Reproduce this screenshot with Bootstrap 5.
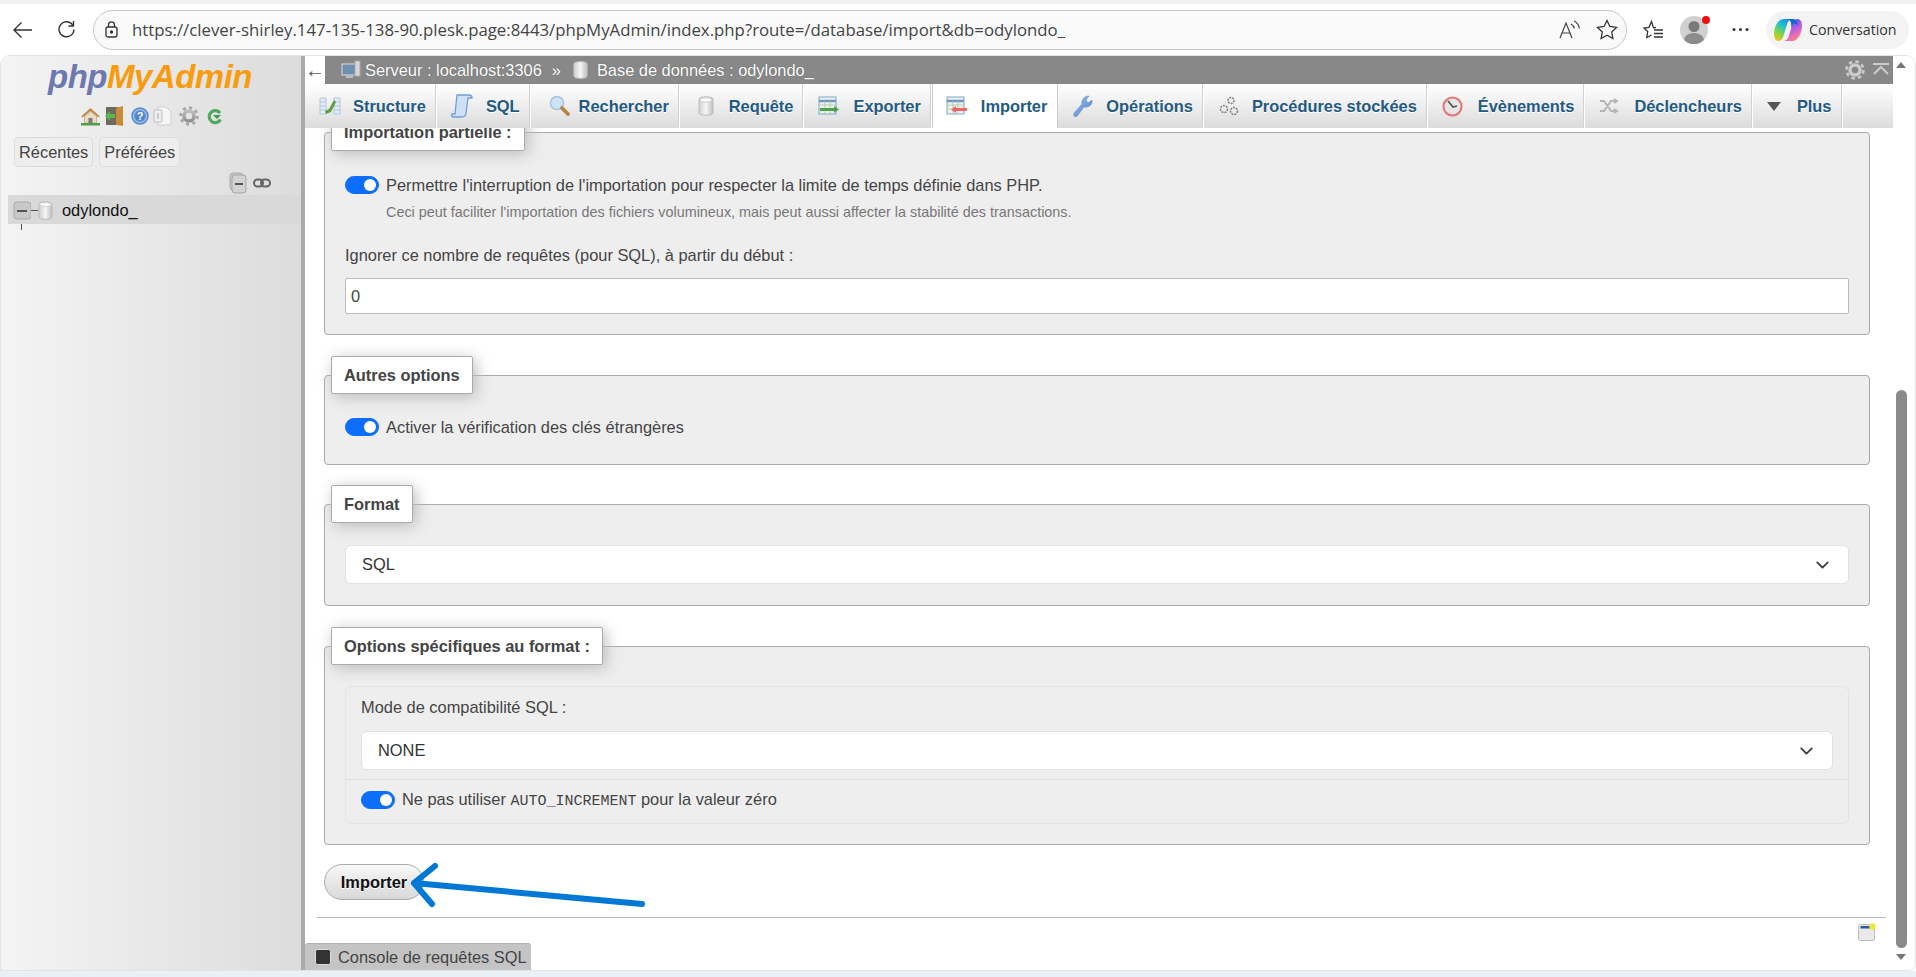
<!DOCTYPE html>
<html lang="fr">
<head>
<meta charset="utf-8">
<title>phpMyAdmin</title>
<link href="https://cdn.jsdelivr.net/npm/bootstrap@5.3.0/dist/css/bootstrap.min.css" rel="stylesheet">
<style>
html,body{height:100%;overflow:hidden}
body{font-family:"Liberation Sans",Arial,sans-serif;font-size:16.4px;color:#444;background:#fff}
.shell{height:977px;width:1916px}
.tabstrip{height:4px;background:#f1f1f1;flex:none}
.toolbar{height:51px;flex:none;background:#fff;padding-left:12px}
.urlbar{width:1534px;height:40px;margin-left:17px;border:1px solid #c8c8c8;border-radius:20px;background:#f9f9f9;padding:0 8px 0 11px}
.urltext{font-family:"Open Sans",sans-serif;font-size:16.8px;color:#444;margin-left:14px;white-space:nowrap}
.pill{width:143px;height:38px;border-radius:19px;background:#f3f3f3;margin-left:17px;padding-left:8px}
.pilltext{font-family:"Open Sans",sans-serif;font-size:14.2px;color:#333;margin-left:7px}
.avatar{position:relative;width:28px;height:28px}
.reddot{position:absolute;right:-2px;top:0;width:8px;height:8px;border-radius:50%;background:#e81010}
.win{flex:1 1 0;min-height:0;border:1px solid #e3e3e3;border-top-left-radius:10px;border-top-right-radius:10px;border-bottom-right-radius:8px;overflow:hidden;position:relative}
.side{width:304px;flex:none;background:linear-gradient(90deg,#f4f4f4,#dcdcdc);border-right:4px solid #a9a9a9}
.logotext{font-weight:700;font-style:italic;font-size:33px;line-height:36px;letter-spacing:-.5px;text-align:center;margin-top:3px;padding-right:2px}
.logotext .p1{color:#6c78af}.logotext .p2{color:#f89c0e}
.quick{height:22px;margin-top:10px;padding-left:79px;gap:3px}
.sidebtn{color:#444;background:#eee;border:1px solid #ddd;border-radius:4px;height:30px;padding:0 4px;line-height:28px}
.sidebtns{margin-top:10px;padding-left:13px;gap:6px}
.treetools{height:28px;padding:4px 0 0 228px;gap:6px}
.dbrow{height:29px;margin-left:7px;background:#d9d9d9;padding:2px 0 0 5px;color:#111}
.dbname{margin-left:9px}
.dbdash{width:7px;height:1px;background:#555}
.treeline{width:1px;height:6px;background:#555;margin-left:20px}
.maincol{min-width:0}
.crumbs{height:28px;flex:none;background:#888;color:#fff;text-shadow:0 0 1px #555}
.backcell{width:20px;height:100%;background:#fff;color:#555;text-shadow:none;font-size:20px}
.crumbsep{margin:0 10px 0 10px}
.dbico{margin:0 9px 0 2px}
.tabband{height:44px;flex:none;background:linear-gradient(#fff,#dcdcdc)}
.tabitem{height:44px;color:#235a81;font-weight:700;border-right:1px solid #fff;box-shadow:inset -1px 0 0 #d2d2d2;padding:0 10px 0 14px;white-space:nowrap;text-shadow:0 1px 0 #fff}
.tabitem.on{background:#fff;box-shadow:none;border-left:1px solid #ccc;border-right:1px solid #ccc;padding-left:13px}
.slot{width:35px;flex:none;display:flex;align-items:center}
.slot.s34{width:34px}
.slot.s36{width:36px}
.slot.slotsm{width:30px}
.pane{flex:1 1 0;min-height:0;overflow:hidden;padding:0 23px 0 19px;position:relative}
.fset{background:#eee;border:1px solid #aaa;border-radius:4px;margin:20px 0 0;padding:0 20px 21px;min-width:0}
.fset:first-child{margin-top:-15px;padding-bottom:20px}
.fset.gap21{margin-top:21px;padding-bottom:23px}
.fset.fset4{margin-top:21px;padding-bottom:20px}
.fleg{float:none;width:auto;font-size:16.4px;font-weight:700;line-height:22px;color:#444;background:#fff;border:1px solid #aaa;border-radius:2px;box-shadow:3px 3px 15px #bbb;padding:7px 12px;margin:0 0 0 -14px;height:38px}
.swrow{height:24px;gap:7px;color:#444}
.swrow .form-check-input{width:34px;height:18px;margin:0;flex:none;float:none;background-color:#0d6efd;border-color:#0d6efd}
.form-switch.swrow{padding-left:0;min-height:0}
.mtop22{margin-top:22px}.mtop21{margin-top:21px}
.hint{font-size:14.4px;line-height:20px;color:#777;margin:5px 0 0 41px}
.lbl{line-height:20px;margin-top:23px}
.field{height:36px;margin-top:13px;border:1px solid #bbb;border-radius:2px;background-color:#fff;color:#444;padding:0 5px}
.sel{height:39px;border-radius:6px;color:#333;font-size:16.4px;padding:0 16px;border-color:#e2e2e2;font-family:inherit;background-position:right 16px center;background-size:19px 14px}
.innerbox{border:1px solid #e4e4e8;border-radius:6px;height:138px}
.innertop{height:93px;padding:9px 15px 0 15px;border-bottom:1px solid #dcdcdc}
.lblh{line-height:22px;margin-bottom:13px}
.inner-sw{margin:8px 0 0 15px}
.mono{font-family:"Liberation Mono",monospace;font-size:15px}
.gobtn{font-size:16.4px;font-weight:700;color:#111;background:linear-gradient(#f8f8f8,#d8d8d8);border:1px solid #aaa;border-radius:18px;height:36px;width:100px;padding:0;margin-top:19px;text-shadow:0 1px 0 #fff}
.rule{height:1px;background:#bbb;opacity:1;border:0;margin:17px -16px 0 -7px}
.notesicon{position:absolute;right:17px;top:795px}
.conbar{height:27px;flex:none}
.contab{width:226px;height:27px;background:#c4c4c4;border-radius:3px 3px 0 0;color:#444;padding-left:10px;gap:7px;white-space:nowrap;border-top:1px solid #b0b0b0}
.scrolltrack{width:22px;flex:none;background:#fff;position:relative}
.thumb{position:absolute;left:3px;top:334px;width:11px;height:558px;border-radius:6px;background:#8a8a8a}
.arr-up{position:absolute;left:3px;top:6px;width:0;height:0;border:5px solid transparent;border-bottom:6px solid #777;border-top:0}
.arr-down{position:absolute;left:3px;top:898px;width:0;height:0;border:5px solid transparent;border-top:6px solid #777;border-bottom:0}
.bottomstrip{height:6px;flex:none;background:#e9f0f8}
.arrowover{position:absolute;left:400px;top:858px;pointer-events:none}
</style>
</head>
<body>
<svg width="0" height="0" class="position-absolute">
  <defs>
    <linearGradient id="cyl" x1="0" y1="0" x2="1" y2="0"><stop offset="0" stop-color="#d0d0d0"/><stop offset=".5" stop-color="#f6f6f6"/><stop offset="1" stop-color="#bdbdbd"/></linearGradient>
    <linearGradient id="gearg" x1="0" y1="0" x2="0" y2="1"><stop offset="0" stop-color="#bdbdbd"/><stop offset="1" stop-color="#8f8f8f"/></linearGradient>
    <linearGradient id="blueg" x1="0" y1="0" x2="1" y2="1"><stop offset="0" stop-color="#9fc0ea"/><stop offset="1" stop-color="#4f82cc"/></linearGradient>
    <linearGradient id="cpa" x1=".7" y1="0" x2=".2" y2="1"><stop offset="0" stop-color="#1b8fe8"/><stop offset=".35" stop-color="#25c2c8"/><stop offset=".65" stop-color="#7ed348"/><stop offset="1" stop-color="#f2c81e"/></linearGradient>
    <linearGradient id="cpb" x1=".3" y1="0" x2=".8" y2="1"><stop offset="0" stop-color="#1e5fe0"/><stop offset=".4" stop-color="#a65be8"/><stop offset=".75" stop-color="#f06fb0"/><stop offset="1" stop-color="#f58a3c"/></linearGradient>
  </defs>
</svg>
<div class="shell d-flex flex-column position-relative">
  <div class="tabstrip"></div>
  <div class="toolbar d-flex align-items-center">
    <svg width="21" height="18" viewBox="0 0 21 18" fill="none" stroke="#333" stroke-width="1.4"><path d="M20 9H2M9.500 1.500 2 9l7.500 7.500"/></svg>
    <svg class="ms-4" width="19" height="19" viewBox="0 0 19 19" fill="none" stroke="#333" stroke-width="1.4"><path d="M16 5.500A7.500 7.500 0 1 0 17 9.500"/><path d="M16.500 1v5h-5"/></svg>
    <div class="urlbar d-flex align-items-center">
      <svg width="13" height="17" viewBox="0 0 13 17" fill="none" stroke="#333" stroke-width="1.300"><rect x="1" y="6" width="11" height="10" rx="2"/><path d="M3.500 6V3.800a3 3 0 0 1 6 0V6"/><circle cx="6.500" cy="11" r="1" fill="#333"/></svg>
      <span class="urltext">https://clever-shirley.147-135-138-90.plesk.page:8443/phpMyAdmin/index.php?route=/database/import&amp;db=odylondo_</span>
      <svg class="ms-auto" width="21" height="20" viewBox="0 0 21 20" fill="none" stroke="#444" stroke-width="1.200"><path d="M1 18 7 3l6 15M3 13h8"/><path d="M12 4c2 1 3 2.500 3.200 4.500M15 1c3 1.500 5 4 5.300 7.500"/></svg>
      <svg class="ms-3" width="22" height="21" viewBox="0 0 22 21" fill="none" stroke="#333" stroke-width="1.300"><path d="m11 1.500 2.900 6 6.600.9-4.800 4.600 1.200 6.500-5.900-3.200-5.900 3.200 1.200-6.500L1.500 8.400l6.600-.9z"/></svg>
    </div>
    <svg class="ms-3" width="21" height="20" viewBox="0 0 21 20" fill="none" stroke="#333" stroke-width="1.300"><path d="M13 7.500 10.500 7.800 8.500 1.500 6 7.300l-5 .7 3.700 3.600L3.800 17.500 8.500 15"/><path d="M11 10h9M11 13.500h9M11 17h9"/></svg>
    <div class="avatar ms-3 me-3"><svg width="28" height="28" viewBox="0 0 28 28"><circle cx="14" cy="14" r="14" fill="#d2d0ce"/><circle cx="14" cy="10.500" r="5.500" fill="#7a7a7a"/><path d="M4 24c1-5 5-7 10-7s9 2 10 7a14 14 0 0 1-20 0z" fill="#8c8c8c"/></svg><span class="reddot"></span></div>
    <svg class="ms-2" width="17" height="5" viewBox="0 0 17 5" fill="#333"><circle cx="2" cy="2.500" r="1.500"/><circle cx="8.500" cy="2.500" r="1.500"/><circle cx="15" cy="2.500" r="1.500"/></svg>
    <div class="pill d-flex align-items-center">
      <svg width="28" height="28" viewBox="0 0 28 28"><path d="M10 3h8c-3 .5-4.300 3-5.200 6l-3 10c-.8 3-2.300 6-5.300 6-3 0-4.500-3-4.500-7C0 11 4 3 10 3z" fill="url(#cpa)"/><path d="M18 25h-8c3-.5 4.300-3 5.200-6l3-10c.8-3 2.300-6 5.300-6 3 0 4.500 3 4.500 7 0 7-4 15-10 15z" fill="url(#cpb)"/><path d="M13 3h6c3 0 4.500 3 5 7-2-3-4-3-5.500-1L17 12c.5-4 .5-8-4-9z" fill="#1a62d8"/></svg>
      <span class="pilltext">Conversation</span>
    </div>
  </div>

  <div class="win d-flex">
    <aside class="side d-flex flex-column">
      <div class="logotext"><span class="p1">php</span><span class="p2">MyAdmin</span></div>
      <div class="quick d-flex align-items-center">
        <svg width="21" height="20" viewBox="0 0 21 20"><path d="M1 10.500 10.500 2 20 10.500l-2 .8-7.500-6.300L3 11.300z" fill="#c08a4a"/><path d="M4.500 10.500 10.500 5.500l6 5V17h-12z" fill="#eadcc0" stroke="#b09a78" stroke-width=".6"/><path d="M8.500 12h4v5h-4z" fill="#7a7a7a"/><path d="M1 17h19v2.500H1z" fill="#4f9f45"/></svg>
        <svg width="20" height="20" viewBox="0 0 20 20"><path d="M2 1h12v18H2z" fill="#6f6a60"/><path d="M12 2l7-2v20l-7-1z" fill="#c98a3c"/><path d="M1 10l5-5v3h5v4H6v3z" fill="#5cb84a"/></svg>
        <svg class="ms-1" width="18" height="18" viewBox="0 0 18 18"><circle cx="9" cy="9" r="8" fill="#8fb6e4" stroke="#5b8bcb" stroke-width="1.500"/><circle cx="9" cy="9" r="5.500" fill="#4f86cf"/><text x="9" y="13" text-anchor="middle" font-size="11" font-weight="700" fill="#fff" font-family="Liberation Sans">?</text></svg>
        <svg width="20" height="20" viewBox="0 0 20 20"><path d="M6 1h8l5 5v13H6z" fill="#f6f6f6" stroke="#d0d0d0"/><rect x="2" y="4" width="8" height="12" rx="1" fill="#efefef" stroke="#bdbdbd"/><rect x="5" y="7" width="2" height="6" fill="#c8c8c8"/></svg>
        <svg class="ms-1" width="20" height="20" viewBox="0 0 20 20"><circle cx="10" cy="10" r="5" fill="none" stroke="url(#gearg)" stroke-width="3.500"/><circle cx="10" cy="10" r="8.300" fill="none" stroke="#a4a4a4" stroke-width="2.800" stroke-dasharray="3 3.500"/></svg>
        <svg class="ms-1" width="17" height="19" viewBox="0 0 17 19" fill="none" stroke="#4ea860" stroke-width="3.200"><path d="M14 6a6 6 0 1 0 .5 6.500"/><path d="M7 8h8l-4 4z" fill="#3e9a50" stroke="none"/></svg>
      </div>
      <div class="sidebtns d-flex">
        <div class="sidebtn">Récentes</div>
        <div class="sidebtn">Préférées</div>
      </div>
      <div class="treetools d-flex align-items-center">
        <svg width="18" height="22" viewBox="0 0 18 22"><rect x="1" y="1" width="13" height="17" rx="3" fill="#c9c9c9" stroke="#aaa"/><rect x="3" y="3" width="14" height="18" rx="3" fill="#d2d2d2" stroke="#a5a5a5"/><path d="M6 12h8" stroke="#555" stroke-width="2"/></svg>
        <svg width="18" height="10" viewBox="0 0 18 10" fill="none" stroke="#666" stroke-width="2"><rect x="1" y="1.500" width="9" height="7" rx="3.500"/><rect x="8" y="1.500" width="9" height="7" rx="3.500"/></svg>
      </div>
      <div class="dbrow d-flex align-items-center">
        <svg width="18" height="20" viewBox="0 0 18 20"><rect x="1" y="1" width="17" height="17" rx="3" fill="#c8c8c8" stroke="#aaa"/><path d="M4 10h10" stroke="#555" stroke-width="2"/></svg>
        <span class="dbdash"></span>
        <svg width="15" height="19" viewBox="0 0 15 19"><path d="M1 3c0-3 13-3 13 0v13c0 3-13 3-13 0z" fill="url(#cyl)" stroke="#bbb"/><ellipse cx="7.500" cy="3.500" rx="6" ry="2" fill="#fff" stroke="#ccc"/></svg>
        <span class="dbname">odylondo_</span>
      </div>
      <div class="treeline"></div>
    </aside>

    <div class="maincol d-flex flex-column flex-grow-1">
      <div class="crumbs d-flex align-items-center">
        <div class="backcell d-flex align-items-center justify-content-center">←</div>
        <svg class="ms-3 me-1" width="20" height="20" viewBox="0 0 20 20"><rect x="1" y="4" width="14" height="11" fill="#6f8fb0" stroke="#ddd"/><rect x="14" y="1" width="5" height="15" fill="#d8d8d8" stroke="#aaa"/><path d="M5 15v3h7v-3" fill="#bbb"/></svg>
        <span>Serveur : localhost:3306</span>
        <span class="crumbsep">»</span>
        <svg class="dbico" width="15" height="18" viewBox="0 0 15 18"><path d="M1 3c0-3 13-3 13 0v12c0 3-13 3-13 0z" fill="url(#cyl)" stroke="#ccc"/></svg>
        <span>Base de données : odylondo_</span>
        <svg class="ms-auto" width="20" height="20" viewBox="0 0 20 20"><circle cx="10" cy="10" r="5" fill="none" stroke="#ccc" stroke-width="3.500"/><circle cx="10" cy="10" r="8.500" fill="none" stroke="#ccc" stroke-width="2.500" stroke-dasharray="3.500 3.200"/></svg>
        <svg class="ms-2 me-1" width="16" height="16" viewBox="0 0 16 16" fill="none" stroke="#ccc" stroke-width="2"><path d="M0 2h16M1 12l7-7 7 7"/></svg>
      </div>
      <nav class="tabband d-flex">
        <div class="tabitem d-flex align-items-center"><span class="slot s34"><svg width="22" height="20" viewBox="0 0 22 20"><path d="M1 2h6v16H1zM15 2h6v16h-6z" fill="#e2ecf6" stroke="#b4c6d8"/><path d="M1 6h6M1 10h6M1 14h6M15 6h6M15 10h6M15 14h6" stroke="#b4c6d8"/><path d="m6 15 4-2 5-9 2 2-5 10-5 2z" fill="#5f9e3e"/></svg></span>Structure</div>
        <div class="tabitem d-flex align-items-center"><span class="slot"><svg width="22" height="24" viewBox="0 0 22 24"><path d="M6 1h12c2 0 3 1 3 3h-4l-2 15c-.3 3-2 4-4 4H3c-2 0-3-1-2-3h3z" fill="#cfe0f4" stroke="#6f9ed6" stroke-width="1.300"/></svg></span>SQL</div>
        <div class="tabitem d-flex align-items-center"><span class="slot s34"><svg class="ms-1" width="22" height="22" viewBox="0 0 22 22"><circle cx="8" cy="8" r="6.500" fill="#cfe3f7" stroke="#a8c4de" stroke-width="1.500"/><path d="m13 13 6 6" stroke="#b98245" stroke-width="3.800" stroke-linecap="round"/></svg></span>Rechercher</div>
        <div class="tabitem d-flex align-items-center"><span class="slot"><svg class="ms-1" width="16" height="20" viewBox="0 0 16 20"><path d="M1 3c0-3 14-3 14 0v14c0 3-14 3-14 0z" fill="url(#cyl)" stroke="#bdbdbd"/><ellipse cx="8" cy="4" rx="6" ry="2" fill="#fff" stroke="#ccc"/></svg></span>Requête</div>
        <div class="tabitem d-flex align-items-center"><span class="slot"><svg width="22" height="20" viewBox="0 0 22 20"><rect x="1" y="1" width="17" height="17" fill="#eef3ea" stroke="#7fa6cc"/><path d="M1 5h17" stroke="#6f96c4" stroke-width="2.500"/><path d="M1 9h17M1 13h17M7 5v13M12 5v13" stroke="#a8c4a8" stroke-width=".8"/><path d="M2 12h14v-2l5 3.500-5 3.500v-2H2z" fill="#4ea24e"/></svg></span>Exporter</div>
        <div class="tabitem on d-flex align-items-center"><span class="slot"><svg width="22" height="20" viewBox="0 0 22 20"><rect x="1" y="1" width="17" height="17" fill="#eef3ea" stroke="#7fa6cc"/><path d="M1 5h17" stroke="#6f96c4" stroke-width="2.500"/><path d="M1 9h17M1 13h17M7 5v13M12 5v13" stroke="#a8c4a8" stroke-width=".8"/><path d="M21 12H10v-2l-5 3.500 5 3.500v-2h11z" fill="#ef6464"/></svg></span>Importer</div>
        <div class="tabitem d-flex align-items-center"><span class="slot s34"><svg width="22" height="24" viewBox="0 0 22 24"><path d="M2 22c-1-1 0-3 1-4l7-8c-1-4 2-8 7-8l-3 4 2 3 4-3c1 5-4 8-8 7l-6 8c-1 2-3 2-4 1z" fill="url(#blueg)" stroke="#6a94cc" stroke-width=".6"/></svg></span>Opérations</div>
        <div class="tabitem d-flex align-items-center"><span class="slot s34"><svg width="22" height="24" viewBox="0 0 22 24" fill="none" stroke="#7d7d7d" stroke-width="1.500"><circle cx="13" cy="6.500" r="3" stroke-dasharray="2 1"/><circle cx="6" cy="15" r="3.500" stroke-dasharray="2 1"/><circle cx="16" cy="17" r="3.500" stroke-dasharray="2 1"/></svg></span>Procédures stockées</div>
        <div class="tabitem d-flex align-items-center"><span class="slot s36"><svg width="21" height="21" viewBox="0 0 21 21"><circle cx="10.500" cy="10.500" r="9" fill="#e6e6e6" stroke="#e07a7a" stroke-width="2.200"/><path d="m6 5 5 6 4-1" fill="none" stroke="#555" stroke-width="1.700"/></svg></span>Évènements</div>
        <div class="tabitem d-flex align-items-center"><span class="slot"><svg width="20" height="16" viewBox="0 0 20 16" fill="none" stroke="#b5b5b5" stroke-width="2"><path d="M1 3h4l7 10h5M1 13h4l7-10h5M15 1l3 2-3 2M15 11l3 2-3 2"/></svg></span>Déclencheurs</div>
        <div class="tabitem d-flex align-items-center"><span class="slot slotsm"><svg width="14" height="9" viewBox="0 0 14 9"><path d="M0 0h14L7 9z" fill="#555"/></svg></span>Plus</div>
      </nav>
      <div class="pane">
        <fieldset class="fset">
          <legend class="fleg">Importation partielle :</legend>
          <div class="form-check form-switch swrow d-flex align-items-center mtop22"><input class="form-check-input" type="checkbox" role="switch" checked aria-label="interruption"><span>Permettre l'interruption de l'importation pour respecter la limite de temps définie dans PHP.</span></div>
          <div class="hint">Ceci peut faciliter l'importation des fichiers volumineux, mais peut aussi affecter la stabilité des transactions.</div>
          <div class="lbl">Ignorer ce nombre de requêtes (pour SQL), à partir du début :</div>
          <div class="field d-flex align-items-center">0</div>
        </fieldset>
        <fieldset class="fset gap21">
          <legend class="fleg">Autres options</legend>
          <div class="form-check form-switch swrow d-flex align-items-center mtop21"><input class="form-check-input" type="checkbox" role="switch" checked aria-label="clés"><span>Activer la vérification des clés étrangères</span></div>
        </fieldset>
        <fieldset class="fset">
          <legend class="fleg">Format</legend>
          <div class="form-select sel d-flex align-items-center mtop22">SQL</div>
        </fieldset>
        <fieldset class="fset fset4">
          <legend class="fleg">Options spécifiques au format :</legend>
          <div class="innerbox mtop21">
            <div class="innertop">
              <div class="lblh">Mode de compatibilité SQL :</div>
              <div class="form-select sel d-flex align-items-center">NONE</div>
            </div>
            <div class="form-check form-switch swrow d-flex align-items-center inner-sw"><input class="form-check-input" type="checkbox" role="switch" checked aria-label="auto"><span class="text-nowrap">Ne pas utiliser <span class="mono">AUTO_INCREMENT</span> pour la valeur zéro</span></div>
          </div>
        </fieldset>
        <button class="gobtn" type="button">Importer</button>
        <hr class="rule">
        <svg class="notesicon" width="18" height="18" viewBox="0 0 18 18"><rect x="0.500" y="1.500" width="16" height="16" rx="2" fill="#e9e9e9" stroke="#bbb"/><rect x="2.500" y="3" width="10" height="2.500" fill="#2a5a9e"/><circle cx="14.500" cy="3.500" r="3.200" fill="#f4e93a"/></svg>
      </div>
      <div class="conbar"><div class="contab d-flex align-items-center"><svg width="16" height="16" viewBox="0 0 16 16"><rect x=".5" y=".5" width="15" height="15" rx="2" fill="#333" stroke="#ddd"/></svg>Console de requêtes SQL</div></div>
    </div>
    <div class="scrolltrack"><span class="arr-up"></span><div class="thumb"></div><span class="arr-down"></span></div>
  </div>
  <div class="bottomstrip"></div>
  <svg class="arrowover" width="250" height="60" viewBox="400 858 250 60" fill="none" stroke="#0078d4" stroke-width="6" stroke-linecap="round" stroke-linejoin="round"><path d="M642 904 414 883M435 866 414 883 432 904"/></svg>
</div>
</body>
</html>
